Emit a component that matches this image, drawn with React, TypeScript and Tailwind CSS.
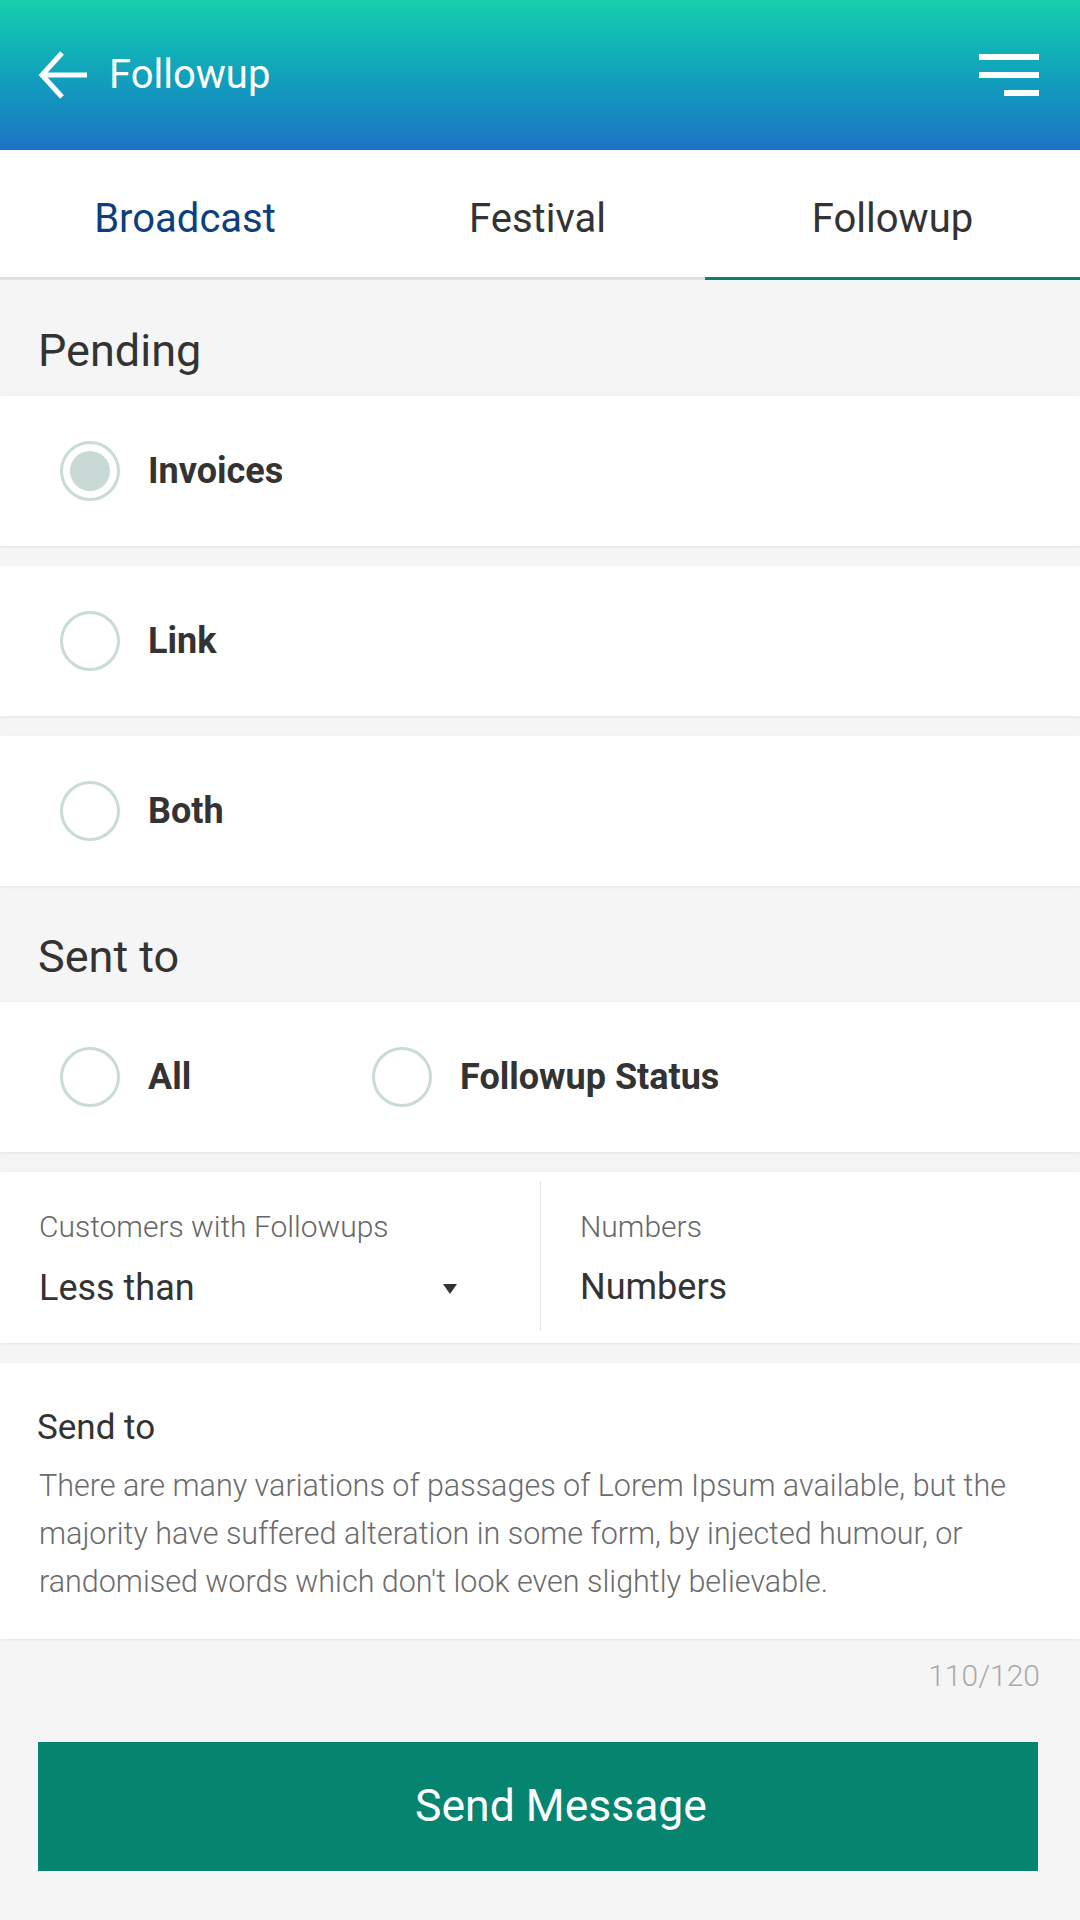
import React from "react";

const font = { fontFamily: "Roboto, 'Noto Sans', sans-serif" };

function Radio({ checked = false }: { checked?: boolean }) {
  return (
    <div className="w-[60px] h-[60px] shrink-0 rounded-full border-[3px] border-[#c9dbd7] flex items-center justify-center">
      {checked && <div className="w-[40px] h-[40px] rounded-full bg-[#c8d9d6]" />}
    </div>
  );
}

function RadioRow({ label, checked = false }: { label: string; checked?: boolean }) {
  return (
    <div className="h-[150px] bg-white flex items-center pl-[60px] shadow-[0_1px_3px_rgba(0,0,0,0.07)]">
      <Radio checked={checked} />
      <span className="ml-[28px] text-[36px] font-bold text-[#333333] leading-none">{label}</span>
    </div>
  );
}

function Gap() {
  return <div className="h-[20px]" />;
}

export default function App() {
  return (
    <div className="w-[1080px] h-[1920px] bg-[#f5f5f5] flex flex-col overflow-hidden" style={font}>
      {/* Header */}
      <div className="h-[150px] bg-gradient-to-b from-[#17cfae] to-[#1e72c4] flex items-center pl-[38px] pr-[41px]">
        <svg width="50" height="50" viewBox="0 0 50 50" className="shrink-0">
          <path d="M3 25 H49" stroke="white" strokeWidth="5" fill="none" />
          <path d="M24 3 L4 25 L24 47" stroke="white" strokeWidth="5" fill="none" strokeLinejoin="miter" />
        </svg>
        <span className="ml-[21px] text-[40px] text-white leading-none">Followup</span>
        <div className="ml-auto flex flex-col items-end gap-[12px]">
          <div className="w-[60px] h-[6px] bg-white" />
          <div className="w-[60px] h-[6px] bg-white" />
          <div className="w-[35px] h-[6px] bg-white" />
        </div>
      </div>

      {/* Tabs */}
      <div className="h-[130px] bg-white flex">
        <div className="w-[370px] flex items-center justify-center border-b-[3px] border-[#e0e0e0] text-[40px] text-[#0d3e7e] leading-none pt-[11px]">
          Broadcast
        </div>
        <div className="w-[335px] flex items-center justify-center border-b-[3px] border-[#e0e0e0] text-[40px] text-[#333333] leading-none pt-[11px]">
          Festival
        </div>
        <div className="w-[375px] flex items-center justify-center border-b-[3px] border-[#0b7f6d] text-[40px] text-[#333333] leading-none pt-[11px]">
          Followup
        </div>
      </div>

      {/* Pending */}
      <div className="h-[116px] pt-[48px] pl-[38px] text-[45px] text-[#333333] leading-none">Pending</div>
      <RadioRow label="Invoices" checked />
      <Gap />
      <RadioRow label="Link" />
      <Gap />
      <RadioRow label="Both" />

      {/* Sent to */}
      <div className="h-[116px] pt-[48px] pl-[38px] text-[45px] text-[#333333] leading-none">Sent to</div>
      <div className="h-[150px] bg-white flex items-center pl-[60px] shadow-[0_1px_3px_rgba(0,0,0,0.07)]">
        <div className="w-[312px] flex items-center">
          <Radio />
          <span className="ml-[28px] text-[36px] font-bold text-[#333333] leading-none">All</span>
        </div>
        <div className="flex items-center">
          <Radio />
          <span className="ml-[28px] text-[36px] font-bold text-[#333333] leading-none">Followup Status</span>
        </div>
      </div>
      <Gap />

      {/* Customers row */}
      <div className="h-[171px] bg-white flex shadow-[0_1px_3px_rgba(0,0,0,0.07)]">
        <div className="w-[540px] pl-[39px] pt-[40px]">
          <div className="text-[30px] font-light text-[#666666] leading-none">Customers with Followups</div>
          <div className="mt-[28px] flex items-center">
            <span className="text-[36px] text-[#333333] leading-none">Less than</span>
            <svg width="14" height="10" viewBox="0 0 14 10" className="ml-auto mr-[83px] mt-[2px]">
              <path d="M0 0 H14 L7 10 Z" fill="#333333" />
            </svg>
          </div>
        </div>
        <div className="w-px mt-[9px] mb-[12px] bg-[#e3e3e3]" />
        <div className="flex-1 pl-[39px] pt-[40px]">
          <div className="text-[30px] font-light text-[#666666] leading-none">Numbers</div>
          <div className="mt-[27px] text-[36px] text-[#333333] leading-none">Numbers</div>
        </div>
      </div>
      <Gap />

      {/* Send to */}
      <div className="bg-white pt-[47px] pb-[33px] pl-[37px] pr-[36px] shadow-[0_1px_3px_rgba(0,0,0,0.07)]">
        <div className="text-[35px] text-[#333333] leading-none">Send to</div>
        <p className="mt-[17px] pl-[2px] text-[30.5px] font-light text-[#6b6b6b] leading-[48px]">
          There are many variations of passages of Lorem Ipsum available, but the majority have suffered alteration in some form, by injected humour, or randomised words which don't look even slightly believable.
        </p>
      </div>

      <div className="pt-[22px] pr-[40px] text-right text-[30px] font-light text-[#aaaaaa] leading-none">110/120</div>

      <div className="mt-[51px] ml-[38px] mr-[42px] h-[129px] bg-[#058470] flex items-center justify-center pl-[46px]">
        <span className="text-[44.5px] text-white leading-none">Send Message</span>
      </div>
    </div>
  );
}
